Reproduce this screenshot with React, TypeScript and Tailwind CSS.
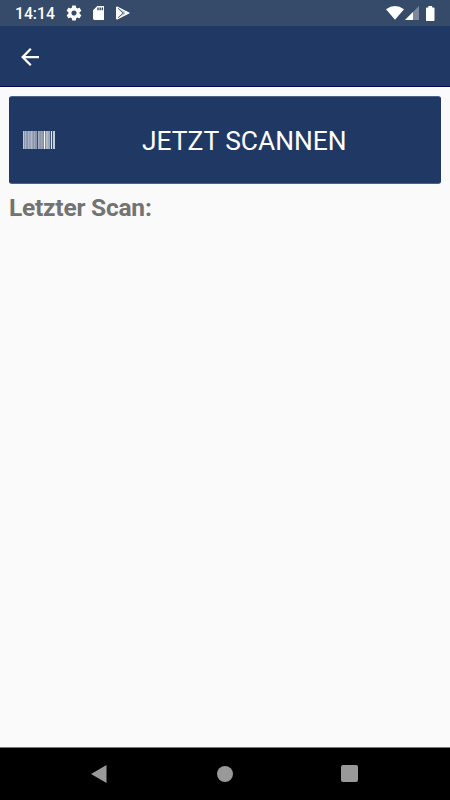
import React from "react";

const bars = [
  { x: 0, w: 1.2, o: 0.5 },
  { x: 2, w: 1, o: 0.35 },
  { x: 3, w: 1.6, o: 0.15 },
  { x: 5, w: 1, o: 0.35 },
  { x: 6, w: 1.5, o: 0.2 },
  { x: 7.6, w: 1.4, o: 0.4 },
  { x: 9, w: 1.6, o: 0.2 },
  { x: 11, w: 1, o: 0.25 },
  { x: 12, w: 2, o: 0.1 },
  { x: 15, w: 1.3, o: 0.3 },
  { x: 16.3, w: 1.5, o: 0.15 },
  { x: 18, w: 1.8, o: 0.2 },
  { x: 21, w: 1, o: 1 },
  { x: 23, w: 2, o: 0.4 },
  { x: 25, w: 2, o: 0.25 },
  { x: 28, w: 1, o: 0.8 },
  { x: 30, w: 2, o: 0.55 },
];

function StatusBar() {
  return (
    <div className="flex h-[26px] shrink-0 items-center bg-[#364b69] text-white">
      <span className="ml-[15px] mt-[2px] w-[51px] text-[15.700px] leading-none font-medium whitespace-nowrap">14:14</span>
      <svg className="h-4 w-4 shrink-0 fill-white" viewBox="1.3 1.3 21.4 21.4">
        <path d="M19.43 12.98c.04-.32.07-.64.07-.98s-.03-.66-.07-.98l2.11-1.65c.19-.15.24-.42.12-.64l-2-3.46c-.12-.22-.39-.3-.61-.22l-2.49 1c-.52-.4-1.08-.73-1.69-.98l-.38-2.65C14.46 2.18 14.25 2 14 2h-4c-.25 0-.46.18-.49.42l-.38 2.65c-.61.25-1.17.59-1.69.98l-2.49-1c-.23-.09-.49 0-.61.22l-2 3.46c-.13.22-.07.49.12.64l2.11 1.65c-.04.32-.07.65-.07.98s.03.66.07.98l-2.11 1.65c-.19.15-.24.42-.12.64l2 3.46c.12.22.39.3.61.22l2.49-1c.52.4 1.08.73 1.69.98l.38 2.65c.03.24.24.42.49.42h4c.25 0 .46-.18.49-.42l.38-2.65c.61-.25 1.17-.59 1.69-.98l2.49 1c.23.09.49 0 .61-.22l2-3.46c.12-.22.07-.49-.12-.64l-2.11-1.65zM12 15.5c-1.93 0-3.5-1.57-3.5-3.5s1.57-3.5 3.5-3.5 3.5 1.57 3.5 3.5-1.57 3.5-3.5 3.5z" />
      </svg>
      <svg className="ml-[10.500px] h-[14px] w-[11.500px] shrink-0 fill-white" viewBox="4 2 16 20" preserveAspectRatio="none">
        <path d="M18 2h-8L4.02 8 4 20c0 1.100.9 2 2 2h12c1.100 0 2-.9 2-2V4c0-1.100-.9-2-2-2zm-6 6h-2V4h2v4zm3 0h-2V4h2v4zm3 0h-2V4h2v4z" />
      </svg>
      <svg className="ml-3 h-[14px] w-[14px] shrink-0" viewBox="0 0 14 14">
        <path d="M.6 1v12L6.500 7z" fill="#fff" />
        <path d="M.6.800 9.500 5.200 7.500 7.200zM.6 13.200 9.500 8.800 7.500 6.800z" fill="#fff" fillOpacity=".75" />
        <path d="M.6 1v12M.6.800 12.800 7 .6 13.200" fill="none" stroke="#fff" strokeWidth="1.1" />
        <path d="M9.700 5 13 7 9.700 9 8 7z" fill="#fff" />
        <path d="m2 2.200 5.300 4.800L2 11.800" fill="none" stroke="#364b69" strokeWidth=".6" />
      </svg>
      <div className="mr-[15.500px] ml-auto flex items-center">
        <svg className="h-[14px] w-[18px]" viewBox="0 0 17 14" preserveAspectRatio="none">
          <path d="M0 3.300Q8.500-3.300 17 3.300L8.500 13.700z" fill="#fff" />
        </svg>
        <svg className="ml-[1px] h-[14px] w-[14px]" viewBox="0 0 14 14">
          <path d="M14 0v14H0z" fill="#fff" fillOpacity=".35" />
          <path d="M8 6v8H0z" fill="#fff" />
        </svg>
        <svg className="ml-[7.500px] h-[15px] w-[8.500px]" viewBox="0 0 9 15" preserveAspectRatio="none">
          <path d="M2.500 0h4v1.500h1.700q.8 0 .8.800v11.900q0 .8-.8.800H.8Q0 15 0 14.200V2.300q0-.8.8-.8h1.700z" fill="#fff" />
        </svg>
      </div>
    </div>
  );
}

export default function App() {
  return (
    <div className="flex h-[800px] w-[450px] flex-col overflow-hidden bg-[#fafafa] font-[Roboto,'Liberation_Sans',sans-serif]">
      <StatusBar />
      <header className="flex h-[61px] shrink-0 items-center border-b border-[#09084f] bg-[#203864] pt-px pl-[20.500px]">
        <button aria-label="Back" className="block">
          <svg className="h-[18px] w-[18px]" viewBox="4 4 16 16">
            <path d="M20 11H7.830l5.590-5.590L12 4l-8 8 8 8 1.410-1.410L7.830 13H20v-2z" fill="#fff" />
          </svg>
        </button>
      </header>
      <main className="flex grow flex-col px-[9px] pt-[9px]">
        <button className="flex h-[88px] w-full shrink-0 items-center rounded-[3px] border border-[#203864] border-t-[#4f6284] border-b-[#4f6284] bg-[#203864] pl-[13px] text-white">
          <svg className="h-[18px] w-8 shrink-0" viewBox="0 0 32 18">
            <rect x="0" y="0" width="32" height="18" fill="#fff" fillOpacity=".42" />
            {bars.map((bar) => (
              <rect key={bar.x} x={bar.x} y="0" width={bar.w} height="18" fill="#fff" fillOpacity={bar.o} />
            ))}
            <path d="M14 0h1v18h-1zM27 0h1v18h-1zM29 0h1v18h-1z" fill="#203864" fillOpacity=".7" />
          </svg>
          <span className="mt-[2px] ml-[87px] text-[26.400px] leading-none whitespace-nowrap">JETZT SCANNEN</span>
        </button>
        <h1 className="mt-[10px] text-[24.500px] leading-[28px] tracking-[-0.22px] font-bold text-[#737373]">Letzter Scan:</h1>
      </main>
      <nav className="flex h-[53px] shrink-0 items-center border-t border-[#777] bg-black">
        <svg className="ml-[91px] h-[18px] w-4" viewBox="0 0 16 18">
          <path d="M0 9 15.500 0v18z" fill="#999" />
        </svg>
        <div className="ml-[110px] -mt-px h-4 w-4 rounded-full bg-[#999]" />
        <div className="ml-[108px] -mt-px h-[17px] w-[17px] rounded-[2px] bg-[#999]" />
      </nav>
    </div>
  );
}
